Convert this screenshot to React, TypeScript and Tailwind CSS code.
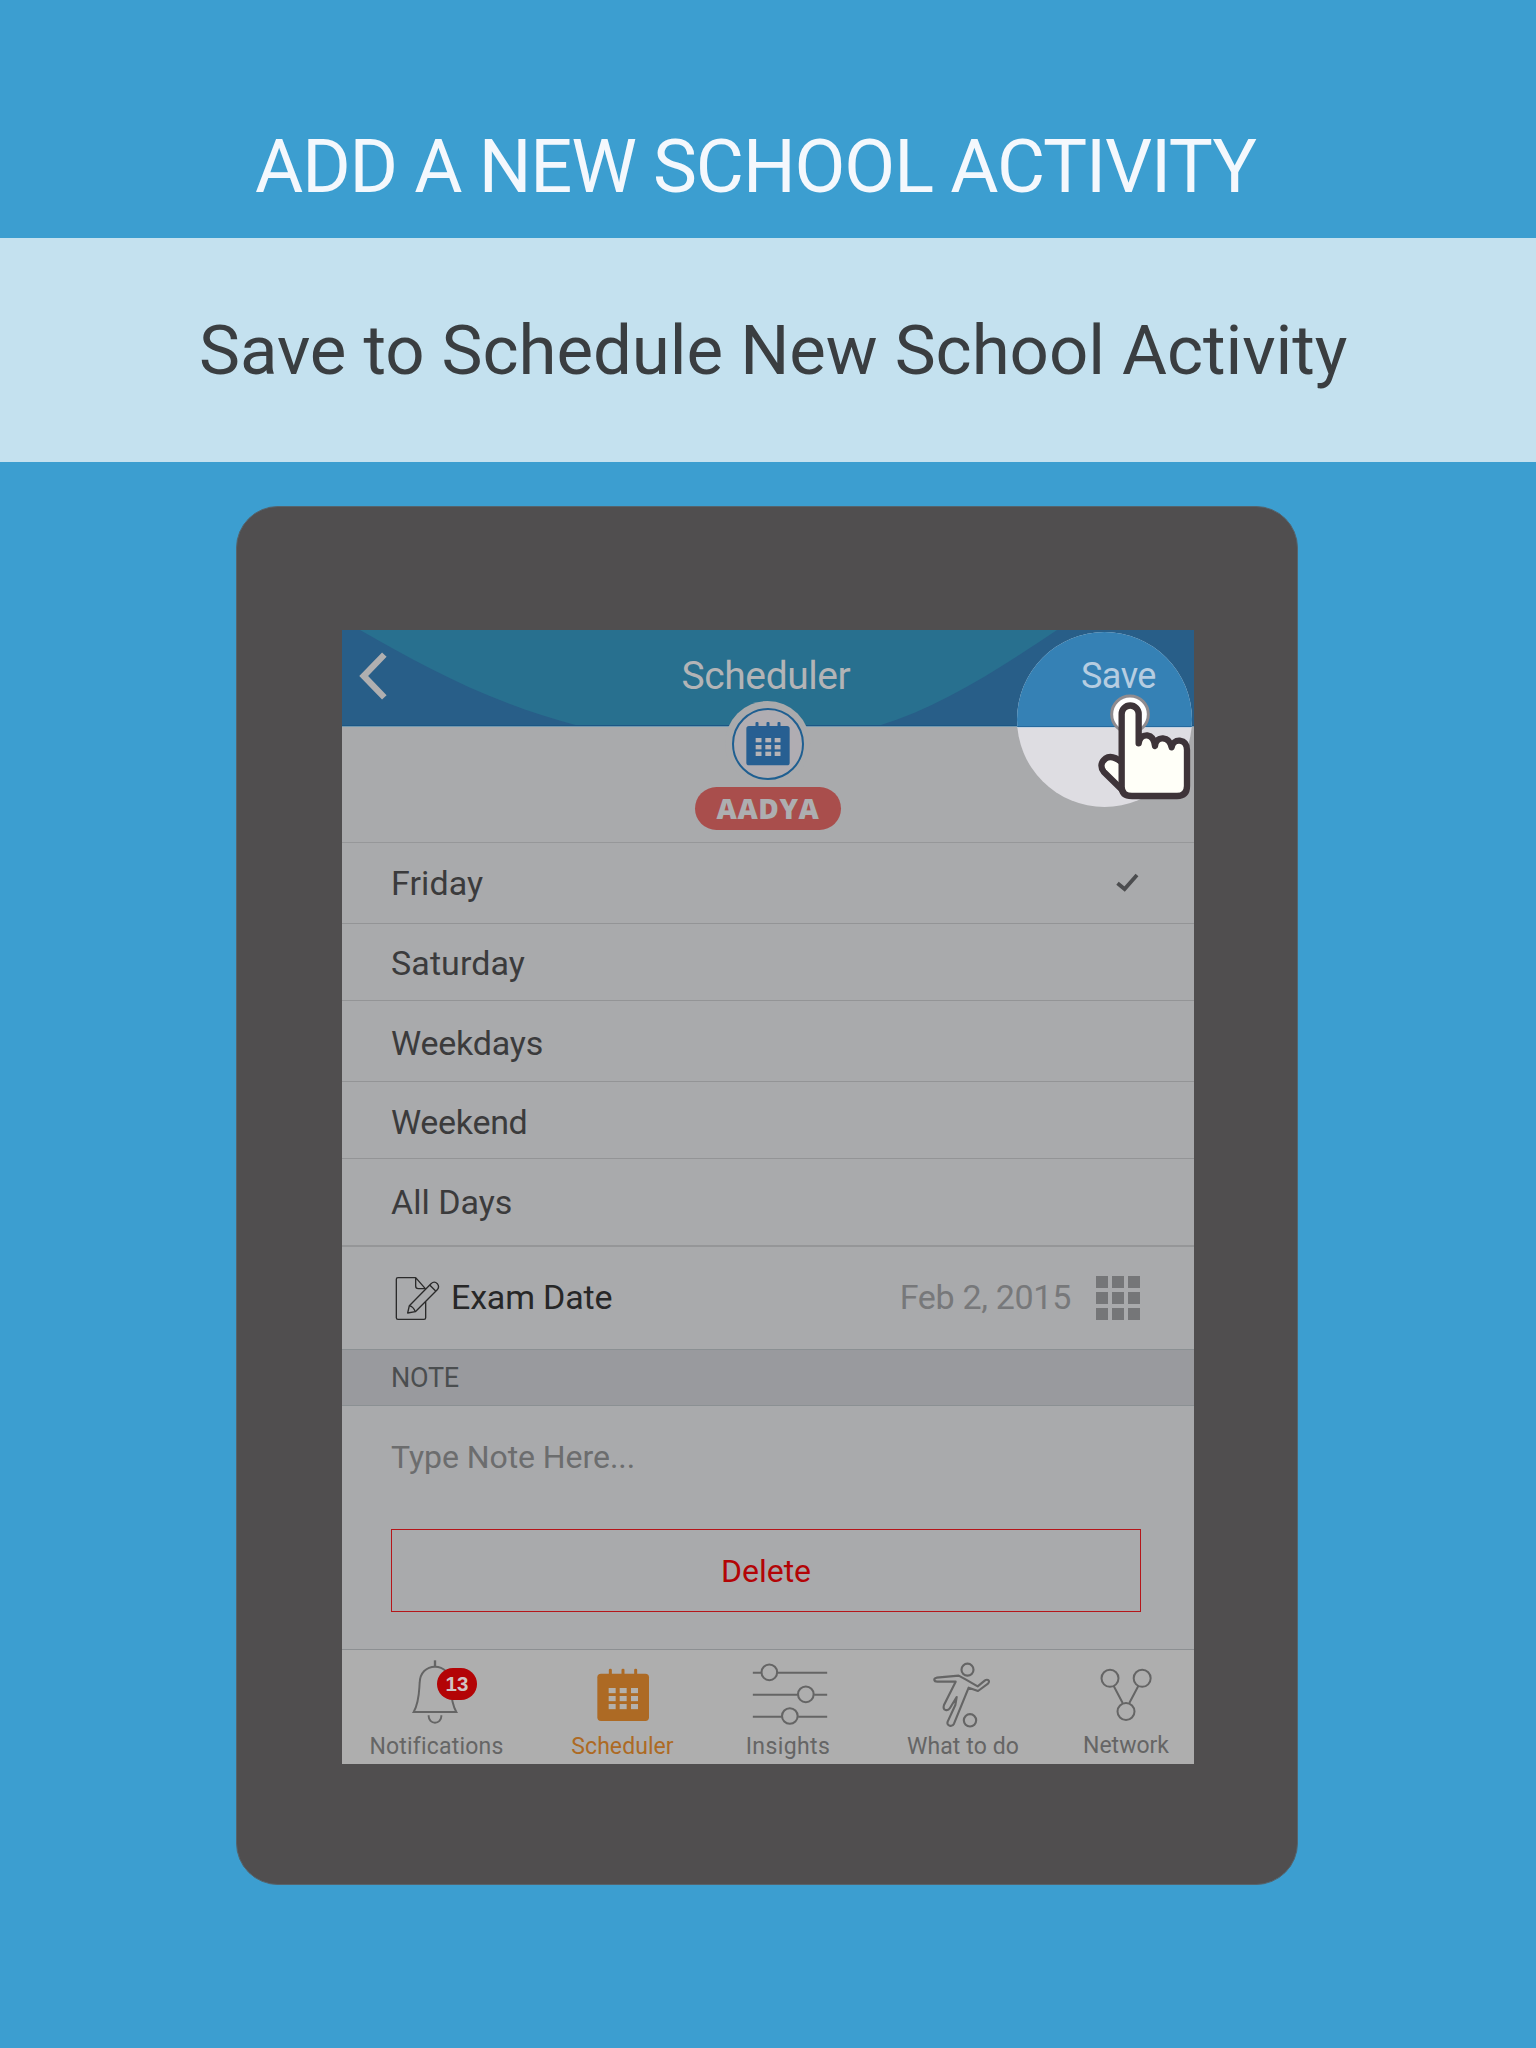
import React from "react";

const days = [
  { name: "Friday", row: "h-[81px]", text: "tracking-[0.1px]", checked: true },
  { name: "Saturday", row: "h-[77px]", text: "pt-[2px] tracking-[0.1px]" },
  { name: "Weekdays", row: "h-[81px]", text: "pt-[3px] tracking-[-0.2px]" },
  { name: "Weekend", row: "h-[77px]", text: "pt-[4px] tracking-[-0.3px]" },
];

function CheckMark() {
  return (
    <svg className="h-6 w-6" viewBox="0 0 24 24" fill="none" stroke="#4c4d4f" strokeWidth="3.8">
      <path d="M2.5 12.2 L9.6 18 L22 4" />
    </svg>
  );
}

function BackArrow() {
  return (
    <svg className="h-[50px] w-[30px]" viewBox="414 484 90 150" fill="none" stroke="#b0afb0" strokeWidth="19">
      <path d="M493 495 L431 559 L493 623" />
    </svg>
  );
}

function ExamIcon() {
  return (
    <svg className="mt-px h-[46px] w-[46px]" viewBox="195 138 138 138" fill="none" stroke="#2b2b2b" strokeWidth="4" strokeLinejoin="round">
      <path d="M257 143 H204 Q199 143 199 148 V263 Q199 268 204 268 H282 Q287 268 287 263 V215" />
      <path d="M257 143 L286 176 H265 Q257 176 257 168 Z" />
      <path d="M233 249 L238 227 L303 161 Q313 152 322 161 Q330 171 321 180 L256 245 Z" />
      <path d="M238 227 Q250 230 256 245 M299 165 L317 183" />
    </svg>
  );
}

function GridIcon() {
  return (
    <div className="mb-px grid grid-cols-3 gap-1">
      {[0, 1, 2, 3, 4, 5, 6, 7, 8].map((n) => (
        <span key={n} className="h-3 w-3 bg-[#757678]" />
      ))}
    </div>
  );
}

function BellIcon() {
  return (
    <svg className="mr-[3px] h-[66px] w-[50px]" viewBox="211 42 150 198" fill="none" stroke="#656565" strokeWidth="5.8">
      <path d="M286 46 V65" strokeWidth="7" />
      <path d="M222 201 C239 171 238 140 240 113 C241 84 260 65 286 65 C312 65 331 84 332 113 C334 140 333 171 350 201 Z" />
      <path d="M267 211 V214 A19 19 0 0 0 305 214 V211" />
    </svg>
  );
}

function CalendarIcon() {
  return (
    <svg className="h-[54px] w-[54px]" viewBox="768 69 162 162" fill="#ad6a24">
      <rect x="772" y="86" width="155" height="142" rx="11" />
      {[811, 849, 887].map((x) => (
        <rect key={x} x={x - 4.5} y="71" width="9" height="22" rx="4" />
      ))}
      {[129, 153, 177].map((y) =>
        [806, 839, 873].map((x) => <rect key={`${x}-${y}`} x={x} y={y} width="21" height="15.5" fill="#b4b1ac" />)
      )}
    </svg>
  );
}

function SlidersIcon() {
  return (
    <svg className="ml-[3px] h-[66px] w-[76px]" viewBox="93.5 48 228 198" fill="none" stroke="#656565" strokeWidth="6.2">
      <path d="M96 83 H121 M170 83 H319 M96 149 H231 M280 149 H319 M96 215 H183 M232 215 H319" />
      <circle cx="145.5" cy="82" r="23.5" />
      <circle cx="255" cy="148" r="23.5" />
      <circle cx="207" cy="213" r="23.5" />
    </svg>
  );
}

function PlayerIcon() {
  return (
    <svg className="mr-[2px] h-[68px] w-[60px]" viewBox="638 48 180 204" fill="none" stroke="#656565" strokeWidth="6.4" strokeLinejoin="round">
      <circle cx="744.5" cy="74" r="18" />
      <circle cx="752" cy="226" r="18.5" />
      <path d="M718 92 L652 98 Q644 100 645 105 Q646 110 654 110 L709 110 L674 180 Q670 192 679 195 Q687 197 692 189 L712 156 L708 180 L685 230 Q682 239 691 242 Q700 244 704 236 L748 128 L776 138 L806 116 Q812 108 806 105 Q801 103 796 107 L775 124 L740 104 Z" />
    </svg>
  );
}

function NetworkIcon() {
  return (
    <svg className="h-[56px] w-[54px]" viewBox="298 82 162 168" fill="none" stroke="#656565" strokeWidth="6">
      <circle cx="331" cy="116" r="25.5" />
      <circle cx="427.5" cy="116" r="25.5" />
      <circle cx="379" cy="215.5" r="25.5" />
      <path d="M342.500 140 L369 190 M415.500 140 L389 190" />
    </svg>
  );
}

function SchedulerBadge() {
  return (
    <div className="absolute top-[71px] left-[383px] flex h-[85px] w-[85px] items-center justify-center rounded-full bg-[#a9aaac]">
      <div className="flex h-[72px] w-[72px] items-center justify-center rounded-full border-[2.500px] border-[#1f5f91] bg-[#b0adb2]">
        <svg className="h-[48px] w-[46px]" viewBox="313 297 138 144" fill="#275f92">
          <rect x="317" y="315" width="130" height="118" rx="8" />
          {[349, 382, 415].map((x) => (
            <rect key={x} x={x - 4.5} y="303" width="9" height="18" rx="3" />
          ))}
          {[351, 372, 392].map((y) =>
            [345, 374, 402].map((x) => <rect key={`${x}-${y}`} x={x} y={y} width="17.500" height="13" fill="#b6b3b6" />)
          )}
        </svg>
      </div>
    </div>
  );
}

function Spotlight() {
  return (
    <div className="absolute top-[2px] left-[675px] h-[175px] w-[175px] overflow-hidden rounded-full bg-[#dedde2]">
      <div className="h-[95px] border-b border-[#256a9e] bg-[#3581b5]" />
      <div className="h-px bg-[#c3d2e1]" />
    </div>
  );
}

function Pointer() {
  return (
    <svg className="absolute top-[60px] left-[752px] h-[120px] w-[100px]" viewBox="342 240 300 360">
      <circle cx="450" cy="313" r="55" fill="#ffffff" stroke="#8f8b8f" strokeWidth="9" />
      <g fill="#fffff8" stroke="#3e3439" strokeWidth="19" strokeLinejoin="round">
        <path d="M426 458 C412 446 393 434 376 446 C362 457 361 472 371 485 L436 549" />
        <path d="M425 530 V312 A25.500 25.500 0 0 1 476 312 V400 C478 384 488 375 502 376 C517 378 523 390 525 408 C526 393 536 384 549 385 C565 386 572 398 575 412 C577 400 587 391 599 392 C614 394 621 404 621 420 V528 Q621 558 591 558 H456 Q425 558 425 530 Z" />
      </g>
    </svg>
  );
}

export default function App() {
  return (
    <div className="h-[2048px] w-[1536px] overflow-hidden bg-[#3c9ed0] font-['Roboto',sans-serif]">
      <header className="h-[238px] pt-[127px] pl-[255px]">
        <h1 className="text-[74px] leading-[80px] tracking-[-1.12px] whitespace-nowrap text-[#f4f8fd]">ADD A NEW SCHOOL ACTIVITY</h1>
      </header>
      <div className="flex h-[224px] items-center bg-[#c4e1ef] pt-[2px] pl-[199px]">
        <h2 className="text-[69px] leading-[80px] tracking-[-0.06px] whitespace-nowrap text-[#3a3e41]">Save to Schedule New School Activity</h2>
      </div>

      <main className="mt-[44px] ml-[236px] h-[1379px] w-[1062px] rounded-[42px] border border-[#55646d] bg-[#504e4f] pt-[123px] pl-[105px]">
        <section className="relative h-[1134px] w-[852px] bg-[#a9aaac]">
          <div className="relative h-[97px] border-b border-[#7299b0] bg-[#285e88]">
            <svg className="absolute inset-0 h-[96px] w-[852px]" viewBox="0 0 852 96" fill="#28708f">
              <path d="M18 0 C81 36 148 73 237 96 H536 C600 76 655 40 715 0 Z" />
            </svg>
            <div className="absolute inset-x-0 bottom-0 h-px bg-[#1c5785]" />
          </div>
          <Spotlight />
          <div className="absolute inset-x-0 top-0 grid h-[91px] grid-cols-3 items-center pr-[38px] pl-4">
            <BackArrow />
            <span className="pl-[18px] text-center text-[39px] leading-[46px] tracking-[-0.42px] text-[#b3b4b6]">Scheduler</span>
            <span className="text-right text-[36px] leading-[46px] tracking-[-0.47px] text-[#b6cde1]">Save</span>
          </div>

          <div className="flex h-[116px] items-end justify-center border-b border-[#969799] pb-[12px]">
            <div className="flex h-[43px] w-[146px] items-center justify-center rounded-full bg-[#a94e4c] font-['Open_Sans'] text-[28px] leading-[43px] font-extrabold tracking-[0.55px] text-[#adaeb0]">
              AADYA
            </div>
          </div>
          <SchedulerBadge />
          <Pointer />

          <ul>
            {days.map((d) => (
              <li key={d.name} className={`flex items-center justify-between border-b border-[#939496] pr-[55px] pl-[49px] text-[34px] leading-[40px] text-[#3b3b3c] ${d.row}`}>
                <span className={d.text}>{d.name}</span>
                {d.checked && <CheckMark />}
              </li>
            ))}
            <li className="flex h-[88px] items-center border-b-2 border-[#959698] pb-px pl-[49px] text-[34px] leading-[40px] text-[#3b3b3c]">All Days</li>
          </ul>

          <div className="flex h-[103px] items-center border-b border-[#8b9093] pr-[54px] pl-[53px] text-[34px] leading-[40px]">
            <ExamIcon />
            <span className="ml-[10px] pb-[3px] tracking-[-0.17px] text-[#272727]">Exam Date</span>
            <span className="mr-[25px] ml-auto pb-[2px] tracking-[-0.3px] text-[#77787a]">Feb 2, 2015</span>
            <GridIcon />
          </div>
          <div className="flex h-[56px] items-center border-b border-[#8b9093] bg-[#999a9e] pt-[2px] pl-[49px] text-[27px] tracking-[-0.26px] text-[#4b4e50]">NOTE</div>
          <div className="h-[123px] pt-[31px] pl-[49px] text-[32px] leading-[40px] tracking-[-0.06px] text-[#6c6d6e]">Type Note Here...</div>
          <div className="mr-[53px] ml-[49px] flex h-[83px] items-center justify-center border border-[#b5161a] text-[32px] leading-[40px] text-[#b30406]">
            Delete
          </div>

          <nav className="mt-[37px] flex h-[115px] border-t border-[#8c8f92] bg-[#aeaeae] text-[23px] leading-6 text-[#656565]">
            <div className="flex w-[189px] flex-col items-center">
              <div className="relative flex h-[85px] items-start pt-[9px]">
                <BellIcon />
                <span className="absolute top-[18px] left-[27px] flex h-8 w-[40px] items-center justify-center rounded-full bg-[#b30406] font-['Liberation_Sans'] text-[20.500px] font-bold text-[#d0c3c3]">13</span>
              </div>
              <span className="tracking-[0.2px]">Notifications</span>
            </div>
            <div className="flex w-[183px] flex-col items-center text-[#ad6a24]">
              <div className="h-[85px] pt-[18px]">
                <CalendarIcon />
              </div>
              <span className="tracking-[0.06px]">Scheduler</span>
            </div>
            <div className="flex w-[148px] flex-col items-center">
              <div className="h-[85px] pt-[11px]">
                <SlidersIcon />
              </div>
              <span className="tracking-[0.4px]">Insights</span>
            </div>
            <div className="flex w-[202px] flex-col items-center">
              <div className="h-[85px] pt-[11px]">
                <PlayerIcon />
              </div>
              <span className="tracking-[0.12px]">What to do</span>
            </div>
            <div className="flex w-[124px] flex-col items-center">
              <div className="h-[84px] pt-[17px]">
                <NetworkIcon />
              </div>
              <span>Network</span>
            </div>
          </nav>
        </section>
      </main>
    </div>
  );
}
